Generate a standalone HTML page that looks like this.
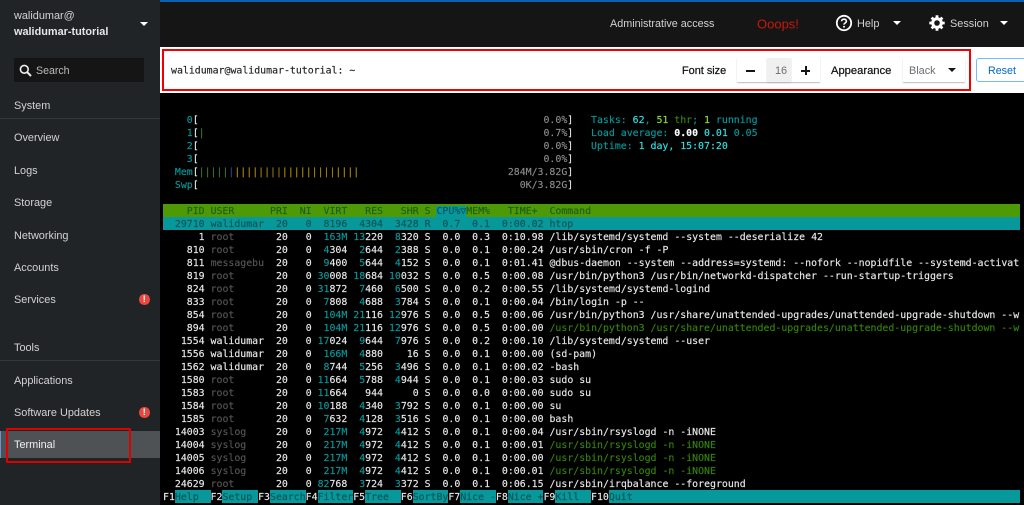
<!DOCTYPE html>
<html><head><meta charset="utf-8">
<style>
html,body{margin:0;padding:0;width:1024px;height:505px;overflow:hidden;background:#000}
body{position:relative;font-family:"Liberation Sans",sans-serif;font-size:10.9px}
.a,.t{position:absolute;white-space:nowrap}
.t{transform:translateY(calc(-50% + 1px))}
.s{color:#d2d2d2;left:14px}
.car{position:absolute;width:0;height:0;border-left:4px solid transparent;border-right:4px solid transparent;border-top:4px solid #fff}
#side{position:absolute;left:0;top:0;width:160px;height:505px;background:#212427}
#top{position:absolute;left:160px;top:0;width:864px;height:47px;background:#151515}
#bar{position:absolute;left:160px;top:47px;width:864px;height:46px;background:#fff}
.lb{-webkit-text-stroke:.25px #151515}
.b{position:absolute;width:10.5px;height:10.5px;border-radius:50%;background:#e8483f;color:#fff;font:bold 9px/10.5px "Liberation Sans",sans-serif;text-align:center}
#term{position:absolute;left:163px;top:113px;width:857px;height:392px;overflow:hidden;font:9.9px/15px "DejaVu Sans Mono",monospace;color:#e8e8e8;-webkit-text-stroke:.15px}
#term pre{position:absolute;left:0;margin:0;font:inherit;white-space:pre;width:857px;height:13px;overflow:hidden}
#term span.p{position:absolute}
u{text-decoration:none;color:#06989a}
s{text-decoration:none;color:#555753}
em{font-style:normal;color:#34820a}
i{font-style:normal;color:#8a8a8a}
.bg{background:#4e9a06;color:#1f5c18}
.cy{background:#06989a;color:#0c5458}
.f{position:absolute;top:0;height:13px;background:#06989a;color:#0c5458}
</style></head><body>
<div id="side">
<div class="t s" style="top:15px">walidumar@</div>
<div class="t s" style="top:31px;font-weight:bold;color:#e6e6e6">walidumar-tutorial</div>
<div class="car" style="left:140px;top:21.5px"></div>
<div class="a" style="left:14px;top:58px;width:130px;height:24px;background:#151515"></div>
<svg class="a" style="left:19px;top:64px" width="13" height="13" viewBox="0 0 13 13"><circle cx="5.3" cy="5.3" r="3.9" fill="none" stroke="#eee" stroke-width="1.6"/><path d="M8.2 8.2L12 12" stroke="#eee" stroke-width="2"/></svg>
<div class="t s" style="left:36px;top:70px;color:#b8bbbe;font-size:10.6px">Search</div>
<div class="t s" style="top:105px">System</div>
<div class="a" style="left:0;top:118px;width:160px;height:1px;background:#34383b"></div>
<div class="t s" style="top:137px">Overview</div>
<div class="t s" style="top:170px">Logs</div>
<div class="t s" style="top:202px">Storage</div>
<div class="t s" style="top:235px">Networking</div>
<div class="t s" style="top:267px">Accounts</div>
<div class="t s" style="top:299px">Services</div>
<div class="b" style="left:139px;top:294px">!</div>
<div class="t s" style="top:347px">Tools</div>
<div class="a" style="left:0;top:360px;width:160px;height:1px;background:#34383b"></div>
<div class="t s" style="top:380px">Applications</div>
<div class="t s" style="top:412px">Software Updates</div>
<div class="b" style="left:139px;top:407px">!</div>
<div class="a" style="left:0;top:431px;width:160px;height:27px;background:#4f5255"></div>
<div class="a" style="left:0;top:431px;width:1px;height:27px;background:#6a95cc"></div>
<div class="t s" style="top:444px;color:#f0f0f0">Terminal</div>
<div class="a" style="left:6px;top:428px;width:121px;height:31px;border:2px solid #e00000;border-radius:1px"></div>
</div>
<div id="top">
<div class="a" style="left:0;top:0;width:864px;height:2px;background:#0a62b4"></div>
<div class="t" style="left:450px;top:23px;color:#d2d2d2;font-size:10.8px">Administrative access</div>
<div class="t" style="left:597px;top:23px;color:#c9190b;font-size:13px">Ooops!</div>
<svg class="a" style="left:675px;top:14px" width="18" height="18" viewBox="0 0 18 18"><circle cx="9" cy="9" r="7.2" fill="none" stroke="#fff" stroke-width="1.8"/><path d="M6.6 7.2C6.6 4.5 11.4 4.5 11.4 7.2C11.4 9 9 9 9 10.6" fill="none" stroke="#fff" stroke-width="1.6"/><circle cx="9" cy="12.8" r="1" fill="#fff"/></svg>
<div class="t" style="left:697px;top:23px;color:#d2d2d2">Help</div>
<div class="car" style="left:733px;top:21px"></div>
<svg class="a" style="left:769px;top:15px" width="16" height="16" viewBox="0 0 16 16"><circle cx="8" cy="8" r="4.3" fill="none" stroke="#fff" stroke-width="3"/><path d="M8 0.3V3M8 13V15.7M0.3 8H3M13 8H15.7M2.6 2.6L4.4 4.4M11.6 11.6L13.4 13.4M2.6 13.4L4.4 11.6M11.6 4.4L13.4 2.6" stroke="#fff" stroke-width="2.8"/></svg>
<div class="t" style="left:790px;top:23px;color:#d2d2d2">Session</div>
<div class="car" style="left:840px;top:21px"></div>
</div>
<div id="bar">
<div class="t" style="left:11px;top:23px;font:9.9px/13px 'DejaVu Sans Mono',monospace;color:#222;-webkit-text-stroke:.15px #222">walidumar@walidumar-tutorial: ~</div>
<div class="t lb" style="left:522px;top:23px;color:#151515">Font size</div>
<div class="a" style="left:577px;top:11px;width:83px;height:24px;background:#fff;box-shadow:0 1px 1px #bbb"></div>
<div class="a" style="left:607px;top:11px;width:24px;height:24px;background:#f0f0f0;box-shadow:0 1px 1px #bbb"></div>
<div class="a" style="left:586px;top:23px;width:9px;height:1.5px;background:#151515"></div>
<div class="t" style="left:615px;top:23px;color:#6a6e73">16</div>
<div class="a" style="left:641px;top:23px;width:9px;height:1.5px;background:#151515"></div>
<div class="a" style="left:645px;top:19px;width:1.5px;height:9px;background:#151515"></div>
<div class="t lb" style="left:671px;top:23px;color:#151515;font-size:11.2px">Appearance</div>
<div class="a" style="left:743px;top:11px;width:62px;height:24px;background:#fff;box-shadow:0 1px 1px #bbb"></div>
<div class="t" style="left:749px;top:23px;color:#6a6e73">Black</div>
<div class="car" style="left:788px;top:21px;border-top-color:#151515"></div>
<div class="a" style="left:816px;top:11px;width:60px;height:22px;border:1px solid #73bcf7;border-radius:3px"></div>
<div class="t" style="left:828px;top:23px;color:#06c;font-size:10.7px">Reset</div>
<div class="a" style="left:2px;top:2px;width:805px;height:38px;border:2px solid #f00000"></div>
</div>
<div id="term">
<pre style="top:0"><span class="p" style="left:4ch"><u>0</u>[</span><span class="p" style="left:64ch"><i>0.0%</i>]</span><span class="p" style="left:72ch"><u>Tasks: </u><span style="color:#34e2e2">62</span><u>, </u><span style="color:#8ae234">51</span> <em>thr</em><u>; </u><span style="color:#8ae234">1</span><u> running</u></span></pre>
<pre style="top:13px"><span class="p" style="left:4ch"><u>1</u>[<em>|</em></span><span class="p" style="left:64ch"><i>0.7%</i>]</span><span class="p" style="left:72ch"><u>Load average: </u><b style="color:#fff">0.00</b> <span style="color:#34e2e2">0.01</span> <u>0.05</u></span></pre>
<pre style="top:26px"><span class="p" style="left:4ch"><u>2</u>[</span><span class="p" style="left:64ch"><i>0.0%</i>]</span><span class="p" style="left:72ch"><u>Uptime: </u><span style="color:#34e2e2">1 day, 15:07:20</span></span></pre>
<pre style="top:39px"><span class="p" style="left:4ch"><u>3</u>[</span><span class="p" style="left:64ch"><i>0.0%</i>]</span></pre>
<pre style="top:52px"><span class="p" style="left:2ch"><u>Mem</u>[<em>|||||</em><span style="color:#204a87">|</span><span style="color:#a68a0a">|||||||||||||||||||||</span></span><span class="p" style="left:58ch"><i>284M/3.82G</i>]</span></pre>
<pre style="top:65px"><span class="p" style="left:2ch"><u>Swp</u>[</span><span class="p" style="left:60ch"><i>0K/3.82G</i>]</span></pre>
<pre class="bg" style="top:91px">    PID USER      PRI  NI  VIRT   RES   SHR S <span class="cy">CPU%▽</span>MEM%   TIME+  Command</pre>
<pre class="cy" style="top:104px">  29710 walidumar  20   0  8196  4304  3428 R  0.7  0.1  0:00.02 htop</pre>
<pre style="top:117px">      1 <s>root     </s>  20   0  <u>163M</u> <u>13</u>220  <u>8</u>320 S  0.0  0.3  0:10.98 /lib/systemd/systemd --system --deserialize 42</pre>
<pre style="top:130px">    810 <s>root     </s>  20   0  <u>4</u>304  <u>2</u>644  <u>2</u>388 S  0.0  0.1  0:00.24 /usr/sbin/cron -f -P</pre>
<pre style="top:143px">    811 <s>messagebu</s>  20   0  <u>9</u>400  <u>5</u>644  <u>4</u>152 S  0.0  0.1  0:01.41 @dbus-daemon --system --address=systemd: --nofork --nopidfile --systemd-activat</pre>
<pre style="top:156px">    819 <s>root     </s>  20   0 <u>30</u>008 <u>18</u>684 <u>10</u>032 S  0.0  0.5  0:00.08 /usr/bin/python3 /usr/bin/networkd-dispatcher --run-startup-triggers</pre>
<pre style="top:169px">    824 <s>root     </s>  20   0 <u>31</u>872  <u>7</u>460  <u>6</u>500 S  0.0  0.2  0:00.55 /lib/systemd/systemd-logind</pre>
<pre style="top:182px">    833 <s>root     </s>  20   0  <u>7</u>808  <u>4</u>688  <u>3</u>784 S  0.0  0.1  0:00.04 /bin/login -p --</pre>
<pre style="top:195px">    854 <s>root     </s>  20   0  <u>104M</u> <u>21</u>116 <u>12</u>976 S  0.0  0.5  0:00.06 /usr/bin/python3 /usr/share/unattended-upgrades/unattended-upgrade-shutdown --w</pre>
<pre style="top:208px">    894 <s>root     </s>  20   0  <u>104M</u> <u>21</u>116 <u>12</u>976 S  0.0  0.5  0:00.00 <em>/usr/bin/python3 /usr/share/unattended-upgrades/unattended-upgrade-shutdown --w</em></pre>
<pre style="top:221px">   1554 walidumar  20   0 <u>17</u>024  <u>9</u>644  <u>7</u>976 S  0.0  0.2  0:00.10 /lib/systemd/systemd --user</pre>
<pre style="top:234px">   1556 walidumar  20   0  <u>166M</u>  <u>4</u>880    16 S  0.0  0.1  0:00.00 (sd-pam)</pre>
<pre style="top:247px">   1562 walidumar  20   0  <u>8</u>744  <u>5</u>256  <u>3</u>496 S  0.0  0.1  0:00.02 -bash</pre>
<pre style="top:260px">   1580 <s>root     </s>  20   0 <u>11</u>664  <u>5</u>788  <u>4</u>944 S  0.0  0.1  0:00.03 sudo su</pre>
<pre style="top:273px">   1583 <s>root     </s>  20   0 <u>11</u>664   944     0 S  0.0  0.0  0:00.00 sudo su</pre>
<pre style="top:286px">   1584 <s>root     </s>  20   0 <u>10</u>188  <u>4</u>340  <u>3</u>792 S  0.0  0.1  0:00.00 su</pre>
<pre style="top:299px">   1585 <s>root     </s>  20   0  <u>7</u>632  <u>4</u>128  <u>3</u>516 S  0.0  0.1  0:00.00 bash</pre>
<pre style="top:312px">  14003 <s>syslog   </s>  20   0  <u>217M</u>  <u>4</u>972  <u>4</u>412 S  0.0  0.1  0:00.04 /usr/sbin/rsyslogd -n -iNONE</pre>
<pre style="top:325px">  14004 <s>syslog   </s>  20   0  <u>217M</u>  <u>4</u>972  <u>4</u>412 S  0.0  0.1  0:00.01 <em>/usr/sbin/rsyslogd -n -iNONE</em></pre>
<pre style="top:338px">  14005 <s>syslog   </s>  20   0  <u>217M</u>  <u>4</u>972  <u>4</u>412 S  0.0  0.1  0:00.00 <em>/usr/sbin/rsyslogd -n -iNONE</em></pre>
<pre style="top:351px">  14006 <s>syslog   </s>  20   0  <u>217M</u>  <u>4</u>972  <u>4</u>412 S  0.0  0.1  0:00.01 <em>/usr/sbin/rsyslogd -n -iNONE</em></pre>
<pre style="top:364px">  24629 <s>root     </s>  20   0 <u>82</u>768  <u>3</u>724  <u>3</u>372 S  0.0  0.1  0:06.15 /usr/sbin/irqbalance --foreground</pre>
<pre style="top:377px"><span class="p" style="left:0">F1</span><span class="f" style="left:2ch;width:6ch">Help</span><span class="p" style="left:8ch">F2</span><span class="f" style="left:10ch;width:6ch">Setup</span><span class="p" style="left:16ch">F3</span><span class="f" style="left:18ch;width:6ch">Search</span><span class="p" style="left:24ch">F4</span><span class="f" style="left:26ch;width:6ch">Filter</span><span class="p" style="left:32ch">F5</span><span class="f" style="left:34ch;width:6ch">Tree</span><span class="p" style="left:40ch">F6</span><span class="f" style="left:42ch;width:6ch">SortBy</span><span class="p" style="left:48ch">F7</span><span class="f" style="left:50ch;width:6ch">Nice -</span><span class="p" style="left:56ch">F8</span><span class="f" style="left:58ch;width:6ch">Nice +</span><span class="p" style="left:64ch">F9</span><span class="f" style="left:66ch;width:6ch">Kill</span><span class="p" style="left:72ch">F10</span><span class="f" style="left:75ch;right:0">Quit</span></pre>
</div>
</body></html>
